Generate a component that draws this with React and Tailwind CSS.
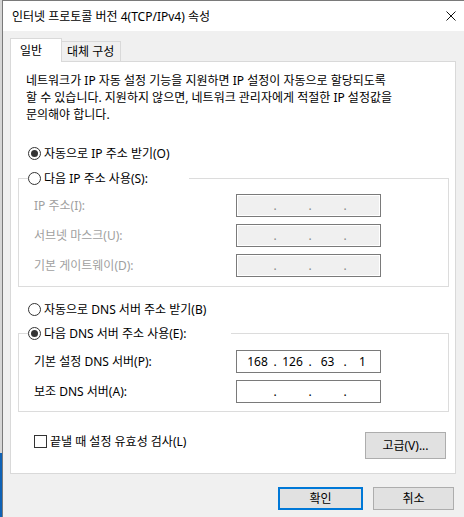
import { Fragment } from 'react'
import clsx from 'clsx'

// Radio bullet, Win10 look
const Radio = ({ checked }) => (
  <span className="w-[13px] h-[13px] rounded-full border border-[#333] bg-white flex items-center justify-center shrink-0">
    {checked && <span className="w-[7px] h-[7px] rounded-full bg-[#333]"></span>}
  </span>
)

const RadioRow = ({ checked, label }) => (
  <div className="flex items-center gap-[3px] h-[17px]">
    <Radio checked={checked} />
    <span className="whitespace-nowrap">{label}</span>
  </div>
)

function IpBox({ parts = ['', '', '', ''], disabled }) {
  return (
    <div
      className={clsx(
        'w-[145px] h-[23px] border border-[#7a7a7a] flex items-center pl-[5px] leading-[17px]',
        disabled ? 'bg-[#f0f0f0] shadow-[inset_0_0_0_1px_#fff] text-[#8a8a8a]' : 'bg-white text-black'
      )}
    >
      {parts.map((p, i) => (
        <Fragment key={i}>
          <span className="w-[31px] text-center">{p}</span>
          {i < 3 && <span className="w-[4px] text-center">.</span>}
        </Fragment>
      ))}
    </div>
  )
}

const FieldRow = ({ label, disabled, parts }) => (
  <div className="flex items-center h-[23px]">
    <span className={clsx('w-[202px] whitespace-nowrap', disabled ? 'text-[#a0a0a0]' : 'text-black')}>{label}</span>
    <IpBox disabled={disabled} parts={parts} />
  </div>
)

export default function App() {
  return (
    <div className="w-[464px] h-[517px] flex overflow-hidden bg-white text-[12px] leading-[17px] text-black font-['Noto_Sans','Noto_Sans_CJK_KR',sans-serif]">
      {/* bit of the window behind */}
      <div className="w-[2px] flex flex-col">
        <div className="flex-1 bg-[#d6d6d6]"></div>
        <div className="h-[64px] bg-[#0f62b5]"></div>
      </div>

      <div className="flex-1 flex flex-col border-l border-t border-[#7a7a7a]">
        {/* title bar */}
        <div className="h-[30px] bg-white flex items-center justify-between pl-[9px] pr-[8px]">
          <span className="whitespace-nowrap">인터넷 프로토콜 버전 4(TCP/IPv4) 속성</span>
          <svg width="10" height="10" viewBox="0 0 10 10">
            <path d="M0.5 0.5 L9.5 9.5 M9.5 0.5 L0.5 9.5" stroke="#111" strokeWidth="1" fill="none" />
          </svg>
        </div>

        <div className="flex-1 bg-[#f0f0f0] pt-[7px]">
          {/* tabs */}
          <div className="flex items-end h-[23px] pl-[7px]">
            <div className="relative z-10 h-[24px] -mb-px w-[52px] bg-white border border-b-0 border-[#d9d9d9] pl-[9px] flex items-center">
              일반
            </div>
            <div className="h-[20px] w-[59px] border border-b-0 border-l-0 border-[#d9d9d9] pl-[5px] flex items-center whitespace-nowrap">
              대체 구성
            </div>
          </div>

          {/* tab panel */}
          <div className="ml-[7px] w-[446px] h-[413px] bg-white border border-[#d9d9d9] flex flex-col">
            <p className="mt-[10px] pl-[15px] whitespace-nowrap">
              네트워크가 IP 자동 설정 기능을 지원하면 IP 설정이 자동으로 할당되도록
              <br />
              할 수 있습니다. 지원하지 않으면, 네트워크 관리자에게 적절한 IP 설정값을
              <br />
              문의해야 합니다.
            </p>

            <div className="mt-[22px] pl-[17px]">
              <RadioRow checked label="자동으로 IP 주소 받기(O)" />
            </div>

            <fieldset className="mt-[8px] ml-[7px] mr-[6px] border border-[#dcdcdc]">
              <legend className="ml-[9px] w-[161px]">
                <RadioRow label="다음 IP 주소 사용(S):" />
              </legend>
              <div className="pt-[7px] pl-[15px] pb-[9px] flex flex-col gap-[7px]">
                <FieldRow disabled label="IP 주소(I):" />
                <FieldRow disabled label="서브넷 마스크(U):" />
                <FieldRow disabled label="기본 게이트웨이(D):" />
              </div>
            </fieldset>

            <div className="mt-[14px] pl-[17px]">
              <RadioRow label="자동으로 DNS 서버 주소 받기(B)" />
            </div>

            <fieldset className="mt-[7px] ml-[7px] mr-[6px] border border-[#dcdcdc]">
              <legend className="ml-[9px] w-[203px]">
                <RadioRow checked label="다음 DNS 서버 주소 사용(E):" />
              </legend>
              <div className="pt-[8px] pl-[15px] pb-[8px] flex flex-col gap-[7px]">
                <FieldRow label="기본 설정 DNS 서버(P):" parts={['168', '126', '63', '1']} />
                <FieldRow label="보조 DNS 서버(A):" />
              </div>
            </fieldset>

            <div className="mt-[20px] pl-[23px] pr-[9px] flex justify-between items-start">
              <div className="mt-[1px] h-[17px] flex items-center gap-[3px]">
                <span className="w-[13px] h-[13px] border border-[#333] bg-white shrink-0"></span>
                <span className="whitespace-nowrap">끝낼 때 설정 유효성 검사(L)</span>
              </div>
              <button className="w-[81px] h-[27px] bg-[#e1e1e1] border border-[#adadad] flex items-center justify-center">
                고급(V)...
              </button>
            </div>
          </div>

          {/* dialog buttons */}
          <div className="mt-[13px] pr-[10px] flex justify-end gap-[10px]">
            <button className="w-[85px] h-[23px] bg-[#e1e1e1] border-2 border-[#0078d7] flex items-center justify-center">
              확인
            </button>
            <button className="w-[81px] h-[23px] bg-[#e1e1e1] border border-[#adadad] flex items-center justify-center">
              취소
            </button>
          </div>
        </div>
      </div>
    </div>
  )
}
